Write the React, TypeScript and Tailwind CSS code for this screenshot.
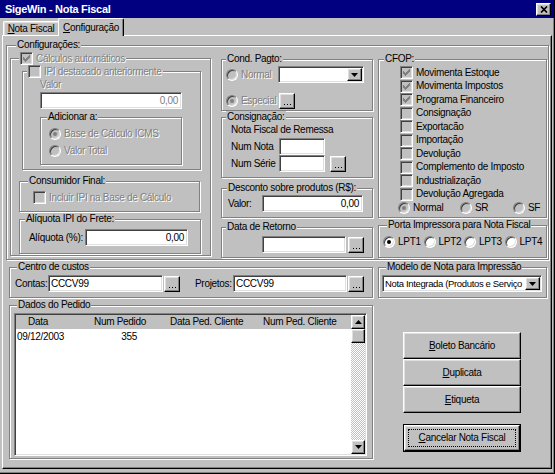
import React from 'react';

// Win98 bevels
const sunken =
  'border border-t-[#808080] border-l-[#808080] border-r-white border-b-white shadow-[inset_1px_1px_0_#404040,inset_-1px_-1px_0_#dfdfdf]';
const raised =
  'border border-t-white border-l-white border-r-black border-b-black shadow-[inset_-1px_-1px_0_#808080,inset_1px_1px_0_#dfdfdf]';
const etched = 'border border-[#808080] shadow-[inset_1px_1px_0_#fff,1px_1px_0_#fff]';
const dim = 'text-[#808080] [text-shadow:1px_1px_0_#fff]';

type Kids = { children?: React.ReactNode };

function Group({
  title,
  className = '',
  legendClass = '',
  children,
}: Kids & { title: React.ReactNode; className?: string; legendClass?: string }) {
  return (
    <fieldset className={`${etched} shrink-0 min-w-0 ${className}`}>
      <legend className={`px-[1px] bg-[#c0c0c0] leading-[12px] whitespace-nowrap ${legendClass}`}>{title}</legend>
      {children}
    </fieldset>
  );
}

function Check({ on = false, off = false }: { on?: boolean; off?: boolean }) {
  return (
    <span
      className={`inline-flex w-[13px] h-[13px] shrink-0 items-center justify-center ${sunken} ${
        off ? 'bg-[#c0c0c0]' : 'bg-white'
      }`}
    >
      {on && (
        <svg width="7" height="7" viewBox="0 0 7 7" shapeRendering="crispEdges" className="block">
          <g fill={off ? '#808080' : '#000'}>
            <rect x="6" y="0" width="1" height="1" />
            <rect x="5" y="1" width="2" height="1" />
            <rect x="0" y="2" width="1" height="1" />
            <rect x="4" y="2" width="3" height="1" />
            <rect x="0" y="3" width="2" height="1" />
            <rect x="3" y="3" width="3" height="1" />
            <rect x="0" y="4" width="5" height="1" />
            <rect x="1" y="5" width="3" height="1" />
            <rect x="2" y="6" width="1" height="1" />
          </g>
        </svg>
      )}
    </span>
  );
}

function Radio({ on = false, off = false }: { on?: boolean; off?: boolean }) {
  return (
    <span
      className={`inline-flex w-[12px] h-[12px] shrink-0 rounded-full items-center justify-center ${sunken} ${
        off ? 'bg-[#c0c0c0]' : 'bg-white'
      }`}
    >
      {on && <span className={`w-[4px] h-[4px] rounded-full ${off ? 'bg-[#808080]' : 'bg-black'}`} />}
    </span>
  );
}

function CheckItem({ label, on = false, off = false, dimLabel = false, className = '' }: {
  label: string; on?: boolean; off?: boolean; dimLabel?: boolean; className?: string;
}) {
  return (
    <div className={`flex items-center gap-[3px] whitespace-nowrap ${className}`}>
      <Check on={on} off={off} />
      <span className={dimLabel ? dim : ''}>{label}</span>
    </div>
  );
}

function RadioItem({ label, on = false, off = false, dimLabel = false, className = '' }: {
  label: string; on?: boolean; off?: boolean; dimLabel?: boolean; className?: string;
}) {
  return (
    <div className={`flex items-center gap-[3px] h-[12px] whitespace-nowrap ${className}`}>
      <Radio on={on} off={off} />
      <span className={dimLabel ? dim : ''}>{label}</span>
    </div>
  );
}

function Field({ className = '', value = '', dimValue = false, left = false }: {
  className?: string; value?: string; dimValue?: boolean; left?: boolean;
}) {
  return (
    <div
      className={`${sunken} bg-white h-[17px] shrink-0 flex items-center ${
        left ? 'pl-[2px]' : 'justify-end pr-[3px]'
      } ${className}`}
    >
      <span className={dimValue ? dim : ''}>{value}</span>
    </div>
  );
}

function DotBtn({ className = '' }: { className?: string }) {
  return (
    <div className={`${raised} bg-[#c0c0c0] w-[16px] h-[16px] shrink-0 flex items-end justify-center pb-[3px] ${className}`}>
      <svg width="7" height="1" viewBox="0 0 7 1" shapeRendering="crispEdges" className="block">
        <rect x="0" y="0" width="1" height="1" fill="#000" />
        <rect x="3" y="0" width="1" height="1" fill="#000" />
        <rect x="6" y="0" width="1" height="1" fill="#000" />
      </svg>
    </div>
  );
}

function Arrow({ up = false }: { up?: boolean }) {
  return (
    <svg width="7" height="4" viewBox="0 0 7 4" className="block">
      <path d={up ? 'M0 4h7L3.5 0z' : 'M0 0h7L3.5 4z'} fill="#000" />
    </svg>
  );
}

function Combo({ className = '', value = '', valueClass = '' }: { className?: string; value?: string; valueClass?: string }) {
  return (
    <div className={`${sunken} bg-white h-[17px] p-[1px] flex shrink-0 ${className}`}>
      <div className={`flex-1 min-w-0 pl-[1px] flex items-center whitespace-nowrap overflow-hidden ${valueClass}`}>{value}</div>
      <div className={`${raised} bg-[#c0c0c0] w-[15px] flex items-center justify-center`}>
        <Arrow />
      </div>
    </div>
  );
}

function PushBtn({ children, className = '' }: Kids & { className?: string }) {
  return (
    <div className={`${raised} bg-[#c0c0c0] w-[118px] flex items-center justify-center ${className}`}>{children}</div>
  );
}

const cfop: [string, boolean][] = [
  ['Movimenta Estoque', true],
  ['Movimenta Impostos', true],
  ['Programa Financeiro', true],
  ['Consignação', false],
  ['Exportacão', false],
  ['Importação', false],
  ['Devolução', false],
  ['Complemento de Imposto', false],
  ['Industrialização', false],
  ['Devolução Agregada', false],
];

export default function App() {
  return (
    <div className="w-[555px] h-[474px] bg-[#c0c0c0] flex flex-col border-r border-b border-black shadow-[inset_-1px_-1px_0_#808080] font-['Liberation_Sans',Arial,sans-serif] text-[10px] leading-[12px] tracking-[-0.3px] text-black overflow-hidden select-none">
      {/* Title bar */}
      <div className="h-[18px] shrink-0 bg-[#000080] flex items-center pl-[5px] pr-[3px]">
        <span className="text-white font-bold text-[11px] tracking-[-0.3px]">SigeWin - Nota Fiscal</span>
        <div className={`ml-auto w-[15px] h-[13px] ${raised} bg-[#c0c0c0] flex items-center justify-center`}>
          <svg width="8" height="7" viewBox="0 0 8 7" className="block">
            <path d="M1 0.5l6 6M7 0.5l-6 6" stroke="#000" strokeWidth="1.7" />
          </svg>
        </div>
      </div>

      {/* Tabs */}
      <div className="h-[17px] shrink-0 flex items-end pl-[3px]">
        <div className="w-[55px] h-[14px] border-t border-l border-white rounded-tl-[2px] shadow-[inset_1px_1px_0_#dfdfdf] flex items-center justify-center">
          <span>
            <span className="underline">N</span>ota Fiscal
          </span>
        </div>
        <div className="relative z-10 -mb-[1px] w-[66px] h-[18px] bg-[#c0c0c0] border-t border-l border-r border-t-white border-l-white border-r-black rounded-t-[2px] shadow-[inset_-1px_0_0_#808080] flex items-center justify-center">
          <span>
            <span className="underline">C</span>onfiguração
          </span>
        </div>
      </div>

      {/* Tab page */}
      <div className="flex-1 mx-[2px] mb-[4px] border border-t-white border-l-white border-r-black border-b-black shadow-[inset_-1px_-1px_0_#808080] pt-[3px] pl-[3px] flex flex-col">
        <Group title="Configurações:" className="w-[543px] h-[221px]" legendClass="ml-[9px]">
          <div className="flex items-start">
            {/* Cálculos automáticos */}
            <Group
              className="ml-[3px] mt-[1px] w-[201px] h-[204px]"
              legendClass="ml-[8px]"
              title={<CheckItem label="Cálculos automáticos" on off dimLabel />}
            >
              <Group
                className="ml-[11px] w-[179px] h-[105px]"
                legendClass="ml-[4px]"
                title={<CheckItem label="IPI destacado anteriormente" off dimLabel />}
              >
                <div className="pl-[17px]">
                  <div className={`${dim} mt-[1px] h-[12px]`}>Valor</div>
                  <Field className="mt-[1px] w-[142px]" value="0,00" dimValue />
                  <Group className="mt-[2px] w-[142px] h-[54px]" legendClass="ml-[6px]" title="Adicionar a:">
                    <div className="pl-[8px] pt-[5px] flex flex-col gap-[5px]">
                      <RadioItem label="Base de Cálculo ICMS" on off dimLabel />
                      <RadioItem label="Valor Total" off dimLabel />
                    </div>
                  </Group>
                </div>
              </Group>

              <Group className="ml-[8px] mt-[5px] w-[181px] h-[37px]" legendClass="ml-[8px]" title="Consumidor Final:">
                <div className="pl-[13px] pt-[4px]">
                  <CheckItem label="Incluir IPI na Base de Cálculo" off dimLabel />
                </div>
              </Group>

              <Group className="ml-[8px] mt-[1px] w-[182px] h-[41px]" legendClass="ml-[5px]" title="Alíquota IPI do Frete:">
                <div className="pl-[9px] pt-[4px] flex items-center">
                  <span className="w-[56px] whitespace-nowrap">Alíquota (%):</span>
                  <Field className="w-[103px]" value="0,00" />
                </div>
              </Group>
            </Group>

            {/* Middle column */}
            <div className="ml-[10px] w-[152px] flex flex-col">
              <Group className="mt-[2px] w-[152px] h-[58px]" legendClass="ml-[4px]" title="Cond. Pagto:">
                <div className="pl-[4px] pt-[1px]">
                  <div className="flex items-center">
                    <RadioItem className="w-[52px]" label="Normal" off dimLabel />
                    <Combo className="w-[86px]" />
                  </div>
                  <div className="flex items-center mt-[10px]">
                    <RadioItem className="w-[53px]" label="Especial" on off dimLabel />
                    <DotBtn />
                  </div>
                </div>
              </Group>

              <Group className="w-[152px] h-[67px]" legendClass="ml-[4px]" title="Consignação:">
                <div className="pl-[9px] pt-[1px]">
                  <div className="h-[12px] whitespace-nowrap">Nota Fiscal de Remessa</div>
                  <div className="flex items-center mt-[2px]">
                    <span className="w-[48px] whitespace-nowrap">Num Nota</span>
                    <Field className="w-[46px]" />
                  </div>
                  <div className="flex items-center">
                    <span className="w-[48px] whitespace-nowrap">Num Série</span>
                    <Field className="w-[46px]" />
                    <DotBtn className="ml-[5px]" />
                  </div>
                </div>
              </Group>

              <Group className="mt-[4px] w-[152px] h-[36px]" legendClass="ml-[5px]" title="Desconto sobre produtos (R$):">
                <div className="pl-[6px] pt-[1px] flex items-center">
                  <span className="w-[34px]">Valor:</span>
                  <Field className="w-[101px]" value="0,00" />
                </div>
              </Group>

              <Group className="mt-[3px] w-[152px] h-[37px]" legendClass="ml-[4px]" title="Data de Retorno">
                <div className="pl-[40px] pt-[3px] flex items-center">
                  <Field className="w-[84px]" />
                  <DotBtn className="ml-[2px] w-[15px]" />
                </div>
              </Group>
            </div>

            {/* Right column */}
            <div className="ml-[5px] w-[169px] flex flex-col">
              <Group className="mt-[2px] w-[169px] h-[165px]" legendClass="ml-[5px]" title="CFOP:">
                <div className="pl-[21px] pt-[1px]">
                  {cfop.map(([label, on]) => (
                    <CheckItem key={label} className="h-[13.5px]" label={label} on={on} off />
                  ))}
                  <div className="flex items-center -ml-[2px] mt-[1px]">
                    <RadioItem className="w-[62px]" label="Normal" on off />
                    <RadioItem className="w-[53px]" label="SR" off />
                    <RadioItem label="SF" off />
                  </div>
                </div>
              </Group>

              <Group className="mt-[1px] w-[169px] h-[39px]" legendClass="ml-[8px]" title="Porta Impressora para Nota Fiscal">
                <div className="pl-[4px] pt-[5px] flex items-center">
                  <RadioItem className="w-[40.5px] gap-[2px]" label="LPT1" on />
                  <RadioItem className="w-[40.5px] gap-[2px]" label="LPT2" />
                  <RadioItem className="w-[40.5px] gap-[2px]" label="LPT3" />
                  <RadioItem className="gap-[2px]" label="LPT4" />
                </div>
              </Group>
            </div>
          </div>
        </Group>

        {/* Lower area */}
        <div className="mt-[1px] flex items-start">
          <div className="ml-[3px] w-[364px] flex flex-col">
            <Group className="w-[364px] h-[37px]" legendClass="ml-[7px]" title="Centro de custos">
              <div className="pl-[5px] pt-[2px] flex items-center">
                <span className="w-[33px]">Contas:</span>
                <Field className="w-[115px]" value="CCCV99" left />
                <DotBtn className="ml-[1px]" />
                <span className="ml-[15px] w-[38px]">Projetos:</span>
                <Field className="w-[114px]" value="CCCV99" left />
                <DotBtn className="ml-[1px]" />
              </div>
            </Group>

            <Group className="mt-[1px] w-[364px] h-[160px]" legendClass="ml-[7px]" title="Dados do Pedido">
              <div className="pl-[4px] pt-[2px]">
                <div className={`${sunken} bg-white w-[353px] h-[143px] p-[1px] flex`}>
                  <div className="flex-1 flex flex-col">
                    <div className="h-[14px] bg-[#c0c0c0] flex items-center whitespace-nowrap">
                      <span className="pl-[12px] w-[78px]">Data</span>
                      <span className="w-[76px]">Num Pedido</span>
                      <span className="w-[93px]">Data Ped. Cliente</span>
                      <span>Num Ped. Cliente</span>
                    </div>
                    <div className="h-[13px] mt-[1px] flex items-center">
                      <span className="pl-[1px] w-[61px]">09/12/2003</span>
                      <span className="w-[60px] text-right">355</span>
                    </div>
                  </div>
                  <div className="w-[14px] flex flex-col [background-image:repeating-conic-gradient(#c0c0c0_0_25%,#fff_0_50%)] [background-size:2px_2px]">
                    <div className={`${raised} bg-[#c0c0c0] h-[14px] flex items-center justify-center`}>
                      <Arrow up />
                    </div>
                    <div className={`${raised} bg-[#c0c0c0] h-[14px]`} />
                    <div className="flex-1" />
                    <div className={`${raised} bg-[#c0c0c0] h-[14px] flex items-center justify-center`}>
                      <Arrow />
                    </div>
                  </div>
                </div>
              </div>
            </Group>
          </div>

          <div className="ml-[5px] w-[169px] flex flex-col">
            <Group className="w-[169px] h-[37px]" legendClass="ml-[7px]" title="Modelo de Nota para Impressão">
              <div className="pl-[3px] pt-[2px]">
                <Combo
                  className="w-[160px]"
                  valueClass="text-[9.5px] tracking-[-0.35px]"
                  value="Nota Integrada (Produtos e Serviço"
                />
              </div>
            </Group>

            <div className="ml-[25px] mt-[34px] flex flex-col">
              <PushBtn className="h-[27px]">
                <span>
                  <span className="underline">B</span>oleto Bancário
                </span>
              </PushBtn>
              <PushBtn className="h-[27px]">
                <span>
                  <span className="underline">D</span>uplicata
                </span>
              </PushBtn>
              <PushBtn className="h-[27px]">
                <span>
                  <span className="underline">E</span>tiqueta
                </span>
              </PushBtn>
              <div className="mt-[11px] w-[118px] h-[28px] border border-black">
                <div className={`${raised} bg-[#c0c0c0] h-full p-[3px] flex`}>
                  <div className="flex-1 border border-dotted border-black flex items-center justify-center">
                    <span>
                      <span className="underline">C</span>ancelar Nota Fiscal
                    </span>
                  </div>
                </div>
              </div>
            </div>
          </div>
        </div>
      </div>
    </div>
  );
}
